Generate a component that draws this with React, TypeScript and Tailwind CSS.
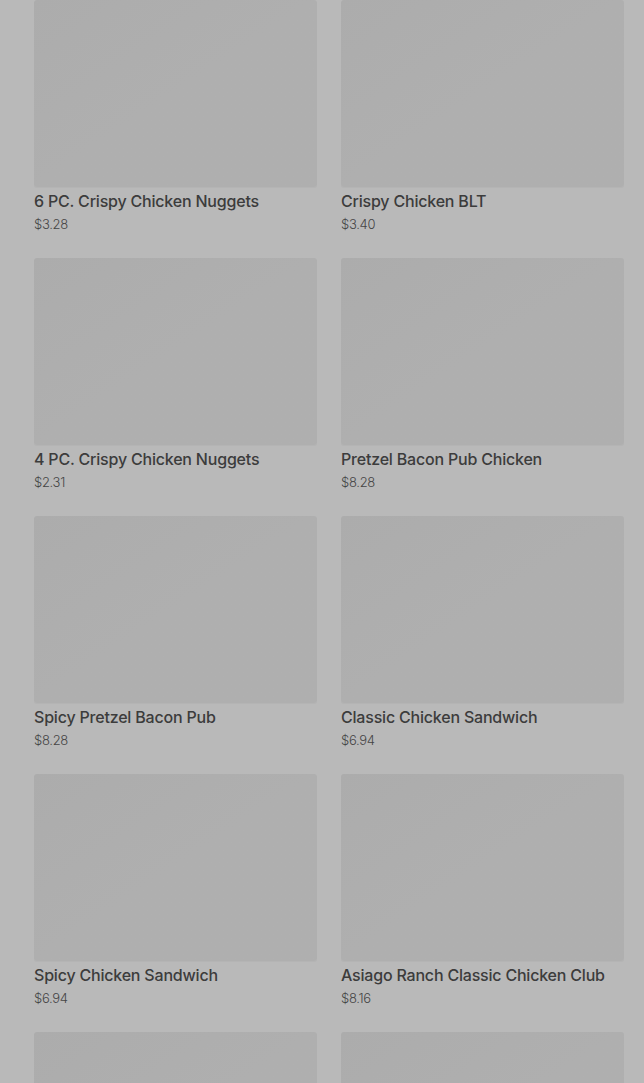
import React from 'react';

type Item = { name?: string; price?: string };

const items: Item[] = [
  { name: '6 PC. Crispy Chicken Nuggets', price: '$3.28' },
  { name: 'Crispy Chicken BLT', price: '$3.40' },
  { name: '4 PC. Crispy Chicken Nuggets', price: '$2.31' },
  { name: 'Pretzel Bacon Pub Chicken', price: '$8.28' },
  { name: 'Spicy Pretzel Bacon Pub', price: '$8.28' },
  { name: 'Classic Chicken Sandwich', price: '$6.94' },
  { name: 'Spicy Chicken Sandwich', price: '$6.94' },
  { name: 'Asiago Ranch Classic Chicken Club', price: '$8.16' },
  {},
  {},
];

export default function MenuGrid() {
  return (
    <div className="h-[1083px] overflow-hidden bg-[#b9b9b9] font-['Inter',sans-serif]">
      {/* Product grid (behind the dimmed overlay) */}
      <div className="grid grid-cols-2 gap-x-6 gap-y-[25px] pl-[34px] pr-5">
        {items.map((item, i) => (
          <div key={i} className="flex flex-col">
            <div className="h-[187px] rounded-[3px] bg-gradient-to-br from-[#acacac] via-[#afafaf] to-[#afafaf] shadow-[0_1px_0_#b4b4b4]" />
            {item.name && (
              <>
                <div className="mt-[3px] text-[16px] leading-[22px] font-medium text-[#3c3c3c] tracking-[-0.2px]">
                  {item.name}
                </div>
                <div className="mt-[3px] text-[13px] leading-[18px] font-light text-[#454545] tracking-[-0.3px]">
                  {item.price}
                </div>
              </>
            )}
          </div>
        ))}
      </div>
    </div>
  );
}
